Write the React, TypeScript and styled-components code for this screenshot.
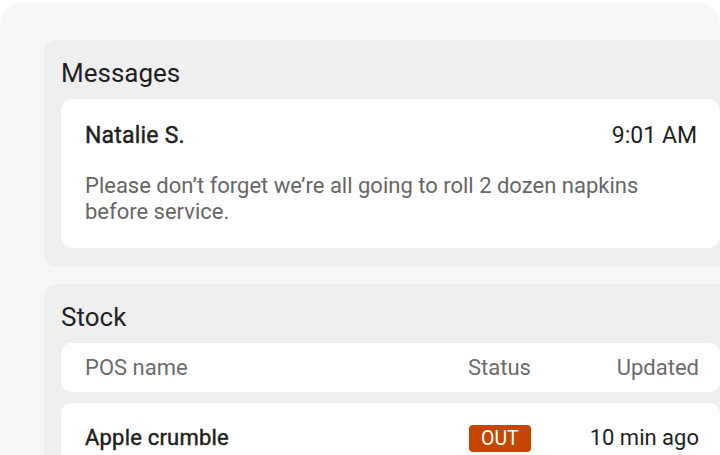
import React from "react";
import styled, { createGlobalStyle } from "styled-components";

const GlobalStyle = createGlobalStyle`
  html, body {
    margin: 0;
    padding: 0;
    background: #ffffff;
    font-family: Roboto, "Liberation Sans", sans-serif;
    overflow: hidden;
  }
`;

const Screen = styled.div`
  width: 720px;
  height: 455px;
  padding-top: 2px;
  box-sizing: border-box;
  overflow: hidden;
`;

const Panel = styled.div`
  width: 720px;
  height: 453px;
  background: #f7f7f7;
  border-radius: 24px 24px 0 0;
  padding: 38px 0 0 44px;
  box-sizing: border-box;
  display: flex;
  flex-direction: column;
  gap: 18px;
  overflow: hidden;
`;

const Section = styled.section`
  width: 700px;
  flex-shrink: 0;
  background: #efefef;
  border-radius: 12px;
  padding: 13px 0 18px 17px;
  box-sizing: border-box;
  display: flex;
  flex-direction: column;
`;

const SectionTitle = styled.h2`
  margin: 0 0 6px;
  font-size: 26px;
  font-weight: 400;
  color: #1f1f1f;
  line-height: 40px;
`;

const Card = styled.div`
  width: 659px;
  background: #ffffff;
  border-radius: 12px;
  box-sizing: border-box;
  padding: 23px 23px 23px 24px;
`;

const MessageHead = styled.div`
  display: flex;
  justify-content: space-between;
  align-items: center;
  font-size: 23px;
  color: #1f1f1f;
  line-height: 28px;
`;

// medium weight: the sandbox's Roboto jumps straight to bold at 500
const Strong = styled.span`
  font-weight: 400;
  -webkit-text-stroke: 0.45px currentColor;
  letter-spacing: 0.2px;
`;

const MessageBody = styled.p`
  margin: 23px 0 0;
  font-size: 22px;
  line-height: 26px;
  color: #666666;
`;

const Row = styled.div<{ $head?: boolean }>`
  width: 659px;
  display: grid;
  grid-template-columns: 1fr 101px 130px;
  align-items: center;
  background: #ffffff;
  border-radius: 10px;
  box-sizing: border-box;
  padding: 0 21px 0 24px;
  height: ${(p) => (p.$head ? "49px" : "68px")};
  margin-bottom: ${(p) => (p.$head ? "11px" : "0")};
  font-size: 22px;
  color: ${(p) => (p.$head ? "#6b6b6b" : "#1f1f1f")};
`;

const StatusCell = styled.span`
  display: flex;
`;

const Badge = styled.span`
  display: inline-block;
  margin: 2px 0 0 1px;
  background: #c44600;
  color: #ffffff;
  font-size: 19.5px;
  line-height: 27px;
  padding: 0 12px;
  border-radius: 4px;
`;

const Updated = styled.span`
  text-align: right;
`;

const App: React.FC = () => (
  <>
    <GlobalStyle />
    <Screen>
      <Panel>
        <Section>
          <SectionTitle>Messages</SectionTitle>
          <Card>
            <MessageHead>
              <Strong>Natalie S.</Strong>
              <span>9:01 AM</span>
            </MessageHead>
            <MessageBody>
              Please don’t forget we’re all going to roll 2 dozen napkins
              <br />
              before service.
            </MessageBody>
          </Card>
        </Section>
        <Section>
          <SectionTitle>Stock</SectionTitle>
          <Row $head>
            <span>POS name</span>
            <StatusCell>Status</StatusCell>
            <Updated>Updated</Updated>
          </Row>
          <Row>
            <Strong>Apple crumble</Strong>
            <StatusCell>
              <Badge>OUT</Badge>
            </StatusCell>
            <Updated>10 min ago</Updated>
          </Row>
        </Section>
      </Panel>
    </Screen>
  </>
);

export default App;
